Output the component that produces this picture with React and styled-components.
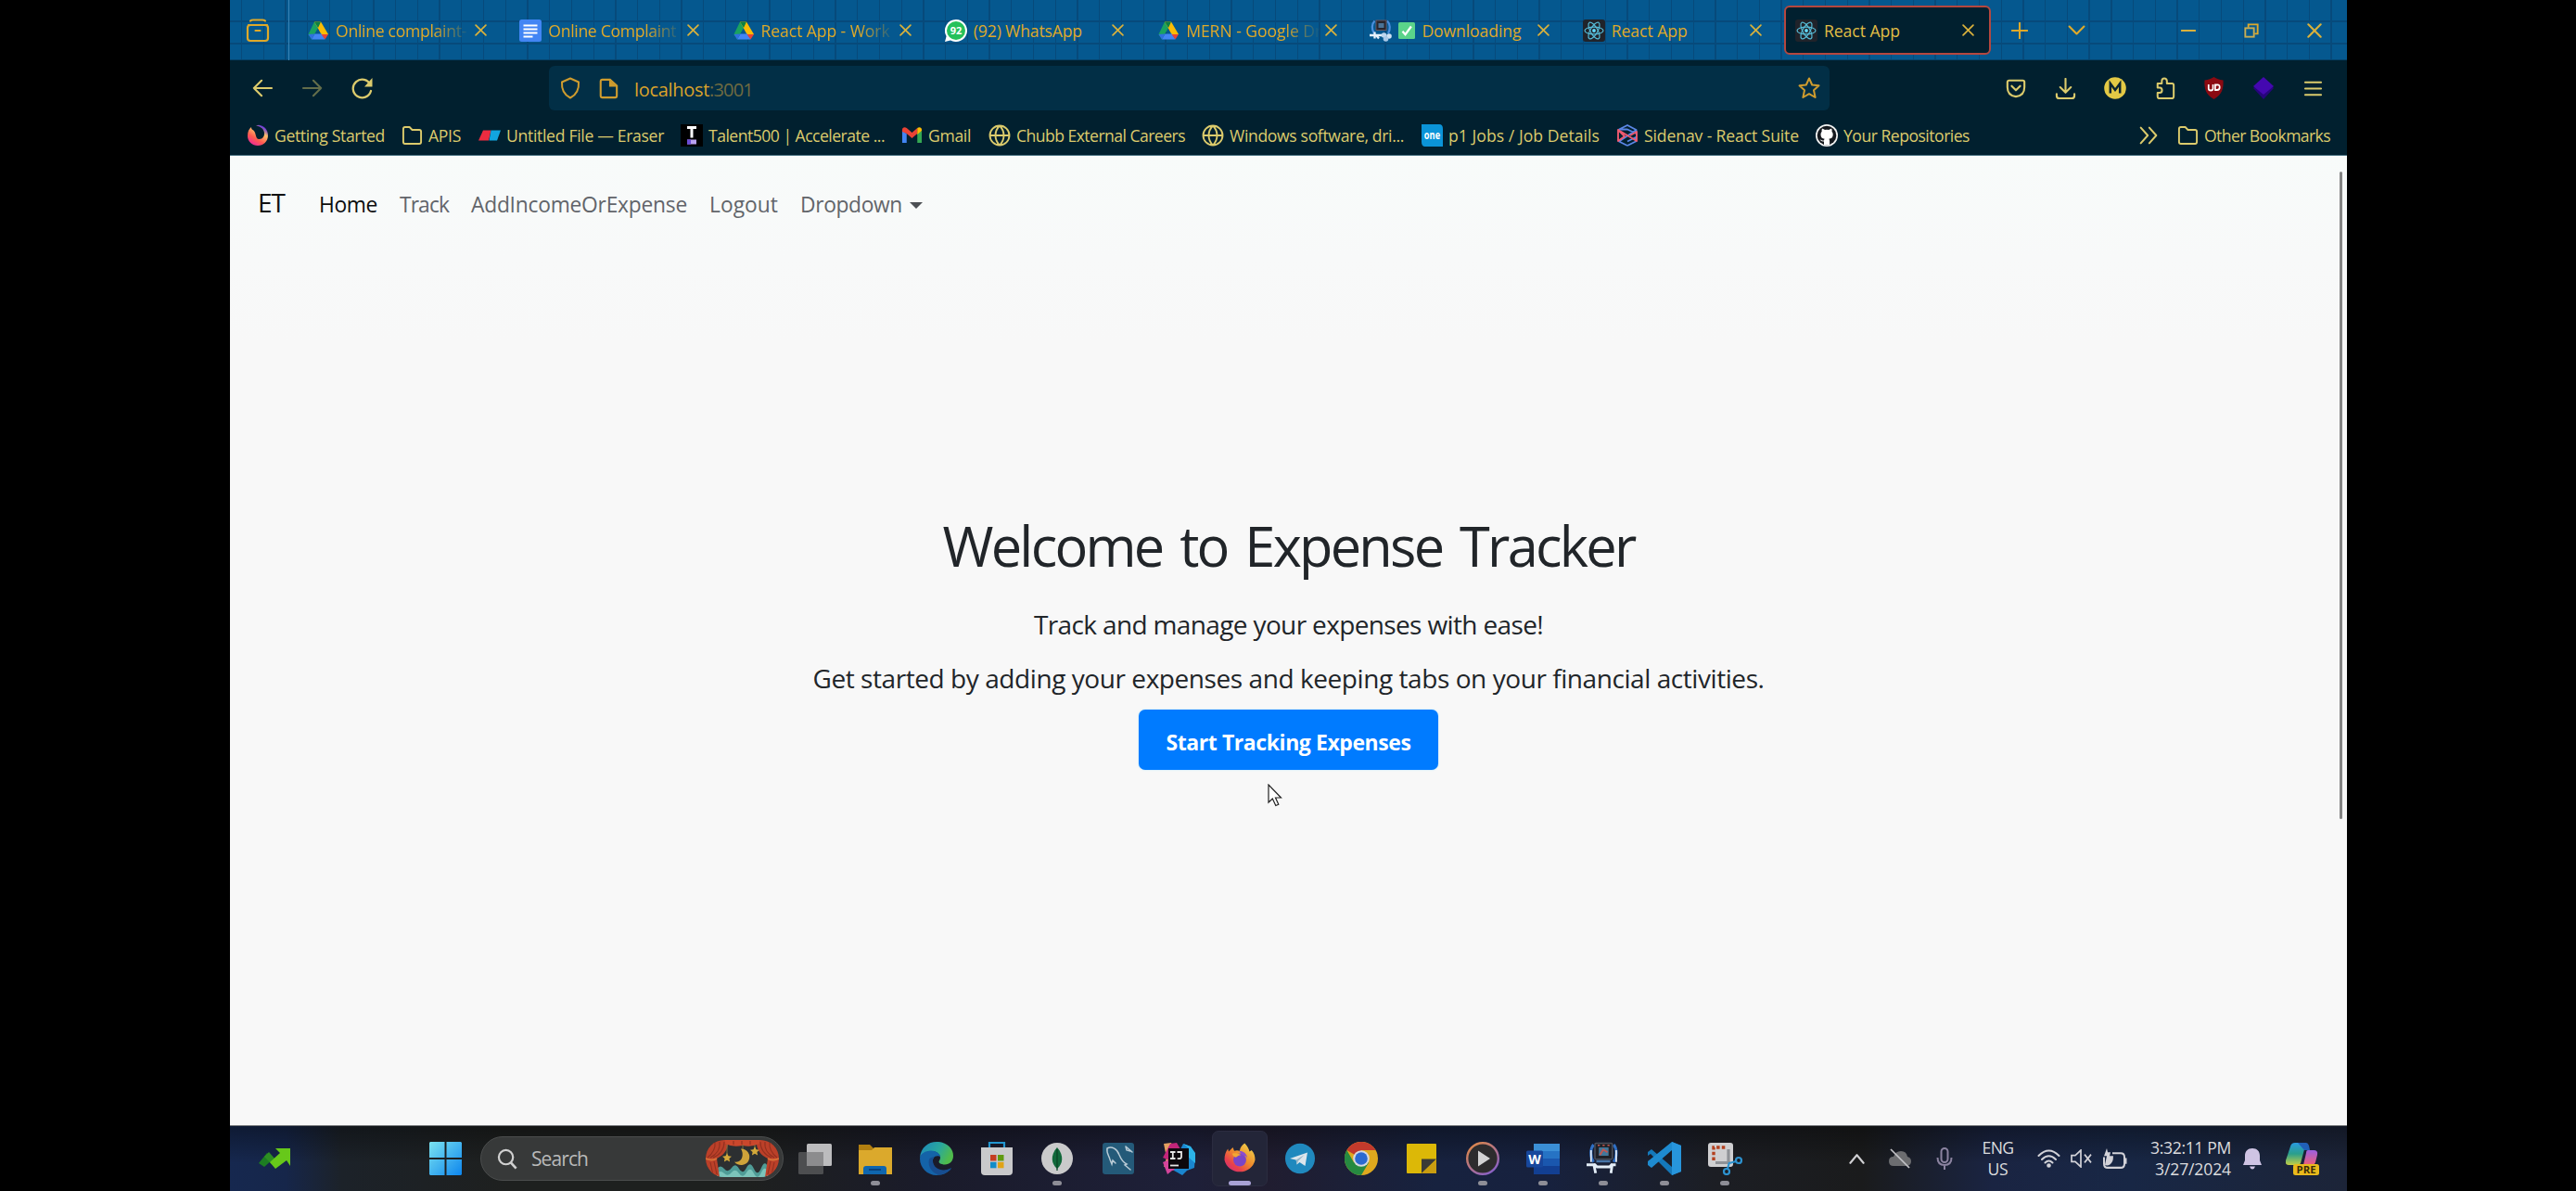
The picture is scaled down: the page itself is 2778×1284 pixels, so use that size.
import React, { useLayoutEffect, useRef, useState } from 'react';
import styled, { createGlobalStyle } from 'styled-components';

const Global = createGlobalStyle`
  * { box-sizing: border-box; }
  body { margin: 0; background: #000; font-family: "Open Sans", "Noto Sans", sans-serif; }
  h1, p { margin: 0; font-weight: 400; }
`;

/* ---------- text that keeps a given line length ---------- */
const Line = styled.span`
  display: block;
  flex: none;
  width: ${(p) => p.$w}px;
  white-space: nowrap;
`;

function Fit({ w, children }) {
  const ref = useRef(null);
  const [ls, setLs] = useState(0);
  useLayoutEffect(() => {
    const natural = ref.current.getBoundingClientRect().width;
    setLs((w - natural) / String(children).length);
  }, [w, children]);
  return (
    <Line $w={w}>
      <span ref={ref} style={{ letterSpacing: ls + 'px' }}>{children}</span>
    </Line>
  );
}

/* ---------- frame ---------- */
const Screen = styled.div`
  width: 2778px;
  height: 1284px;
  padding: 0 247px 0 248px;
  background: #000;
  overflow: hidden;
`;
const Desktop = styled.div`
  display: flex;
  flex-direction: column;
  width: 2283px;
  height: 1284px;
`;

/* ---------- tab strip ---------- */
const TabStrip = styled.div`
  display: flex;
  align-items: center;
  height: 65px;
  flex: none;
  background-color: #05588f;
  background-image:
    linear-gradient(to bottom, transparent 22px, #074a7b 22px, #074a7b 24px, transparent 24px, transparent 46px, #074a7b 46px, #074a7b 48px, transparent 48px, transparent 64px, #06426b 64px),
    repeating-linear-gradient(to right, transparent 0, transparent 12px, #074a7b 12px, #074a7b 13.3px, transparent 13.3px, transparent 23.72px);
`;
const ViewButton = styled.div`
  display: flex;
  align-items: center;
  justify-content: center;
  flex: none;
  width: 64px;
  height: 65px;
  padding-right: 4px;
  border-right: 1px solid #3a86b8;
`;
const Tabs = styled.div`
  display: flex;
  flex: none;
  gap: 6.2px;
  margin-left: 7px;
`;
const Tab = styled.div`
  display: flex;
  align-items: center;
  width: 223.1px;
  height: 53px;
  padding-left: 10px;
  border-radius: 6px;
  border: 2px solid ${(p) => (p.$active ? '#b5473f' : 'transparent')};
  background: ${(p) => (p.$active ? '#01202f' : 'transparent')};
`;
const TabLabel = styled.div`
  display: flex;
  align-items: center;
  flex: none;
  gap: 7px;
  width: 150px;
  height: 30px;
  margin: 1px -6px 0 7px;
  overflow: hidden;
  font-size: 17.6px;
  line-height: 30px;
  color: ${(p) => (p.$active ? '#e0bd45' : '#dfa92a')};
  mask-image: ${(p) => (p.$fade ? 'linear-gradient(to right, #000 105px, transparent 145px)' : 'none')};
`;
const StripTools = styled.div`
  display: flex;
  align-items: center;
`;
const WindowButtons = styled.div`
  display: flex;
  margin-left: 57px;
`;
const Slot = styled.div`
  display: flex;
  align-items: center;
  justify-content: center;
  flex: none;
  width: ${(p) => p.$w}px;
  height: ${(p) => p.$h || 24}px;
`;

/* ---------- toolbar ---------- */
const Toolbar = styled.div`
  display: flex;
  align-items: center;
  height: 60px;
  flex: none;
  background: #01202f;
`;
const UrlBar = styled.div`
  display: flex;
  align-items: center;
  flex: none;
  width: 1381px;
  height: 48px;
  margin: 0 174px 0 166px;
  border-radius: 6px;
  background: #022f46;
  color: #dba32b;
  font-size: 20px;
`;
const UrlText = styled.div`
  display: flex;
  flex: 1;
  padding: 2px 0 0 10px;
`;
const Port = styled.span`
  color: #6f6b41;
`;

/* ---------- bookmarks ---------- */
const Bookmarks = styled.div`
  display: flex;
  align-items: center;
  height: 43px;
  padding: 0 0 1px 18px;
  flex: none;
  background: #01202f;
  border-bottom: 1px solid #4d7685;
  color: #dccb6c;
  font-size: 17.6px;
  line-height: 26px;
`;
const Bookmark = styled.div`
  display: flex;
  align-items: center;
  flex: none;
  gap: 6px;
  margin-right: ${(p) => (p.$gap === undefined ? 18 : p.$gap)}px;
`;

/* ---------- page ---------- */
const Page = styled.div`
  position: relative;
  height: 1045px;
  flex: none;
  background: linear-gradient(#f8fbfa 0, #f8f9f9 110px, #f8f8f8 200px);
`;
const Navbar = styled.nav`
  display: flex;
  align-items: baseline;
  height: 84px;
  padding: 32px 0 0 30px;
  color: #62656a;
  font-size: 22.8px;
  line-height: 36px;
`;
const Brand = styled.div`
  margin-right: 37px;
  font-size: 28px;
  color: #111;
`;
const NavLink = styled.div`
  display: flex;
  align-items: center;
  gap: 8px;
  margin-right: 24px;
  color: ${(p) => (p.$active ? '#0c0d0e' : 'inherit')};
`;
const Caret = styled.span`
  border-left: 7px solid transparent;
  border-right: 7px solid transparent;
  border-top: 7px solid #4d5054;
`;
const Hero = styled.main`
  display: flex;
  flex-direction: column;
  align-items: center;
  padding: 294px 0 0 0;
  color: #212529;
`;
const Title = styled.h1`
  font-size: 59.5px;
  line-height: 84px;
  word-spacing: 6px;
`;
const Lead = styled.p`
  margin-top: ${(p) => p.$top}px;
  font-size: 28px;
  line-height: 40px;
`;
const StartButton = styled.div`
  display: flex;
  align-items: center;
  justify-content: center;
  width: 323px;
  height: 65px;
  margin-top: 14px;
  padding-top: 4px;
  border-radius: 7px;
  background: #007bff;
  box-shadow: 0 0 2px #9fdcff;
  color: #fff;
  font-size: 23px;
  font-weight: 700;
`;
const Pointer = styled.svg`
  position: absolute;
  left: 1119px;
  top: 677px;
`;
const ScrollThumb = styled.div`
  position: absolute;
  right: 5px;
  top: 17px;
  width: 3px;
  height: 698px;
  border-radius: 2px;
  background: #858585;
`;

/* ---------- taskbar ---------- */
const Taskbar = styled.div`
  display: flex;
  align-items: center;
  height: 71px;
  flex: none;
  border-top: 1px solid #77797c;
  color: #d4d4d6;
  background:
    linear-gradient(rgba(0, 0, 0, 0.35), rgba(0, 0, 0, 0) 40px),
    linear-gradient(to right, #16284f 0, #16264a 60px, #1c2229 120px, #1e201f 300px, #1e201f 560px, #1a1b2a 750px, #1e2039 1040px, #201d30 1120px, #17223f 1300px, #17213e 1420px, #1c1e24 1600px, #1a1b1c 1760px, #1a2442 1900px, #182745 2050px, #1c2438 2283px);
`;
const Trend = styled.div`
  width: 215px;
  padding-left: 31px;
  height: 24px;
`;
const Search = styled.div`
  display: flex;
  align-items: center;
  justify-content: space-between;
  width: 327px;
  height: 48px;
  margin-left: 20px;
  padding: 0 4px 0 17px;
  border: 1px solid #4b4d4d;
  border-radius: 24px;
  background: #373939;
  color: #b9baba;
  font-size: 21px;
`;
const SearchText = styled.div`
  flex: 1;
  padding-left: 14px;
`;
const Apps = styled.div`
  display: flex;
  flex: none;
  margin-left: 1px;
`;
const AppCell = styled.div`
  display: flex;
  flex-direction: column;
  align-items: center;
  width: 65.45px;
  height: 60px;
`;
const AppTile = styled.div`
  display: flex;
  flex-direction: column;
  align-items: center;
  width: 60px;
  height: 60px;
  padding-top: 11px;
  border-radius: 7px;
  border: 1px solid ${(p) => (p.$active ? '#2b2c40' : 'transparent')};
  background: ${(p) => (p.$active ? '#232538' : 'transparent')};
`;
const Indicator = styled.div`
  width: ${(p) => (p.$wide ? 24 : 10)}px;
  height: 5px;
  margin-top: 6px;
  border-radius: 3px;
  background: ${(p) => (p.$wide ? '#a9a2d6' : '#8e8e97')};
`;
const Tray = styled.div`
  display: flex;
  align-items: center;
  flex: none;
  margin-left: 86px;
`;
const Clock = styled.div`
  display: flex;
  flex-direction: column;
  align-items: ${(p) => p.$align || 'center'};
  width: ${(p) => p.$w}px;
  font-size: 17.6px;
  line-height: 23.5px;
  color: #dcdcde;
`;

/* ---------- icons ---------- */
const Svg = ({ w = 24, h = w, vb = '0 0 24 24', children, ...rest }) => (
  <svg width={w} height={h} viewBox={vb} fill="none" preserveAspectRatio="none" {...rest}>{children}</svg>
);
const Stroke = ({ d, w = 24, h = w, c = '#dccb6c', s = 2, o = 1 }) => (
  <Svg w={w} h={h}><path d={d} stroke={c} strokeWidth={s} strokeOpacity={o} strokeLinecap="round" strokeLinejoin="round" /></Svg>
);
const Close = ({ s = 13, c = '#d9b13c' }) => <Stroke w={s} c={c} s={3.2} d="M2 2l20 20M22 2L2 22" />;

const Drive = () => (
  <Svg>
    <path d="M8 2.500L12 9 5 21.500 1.500 16z" fill="#1aa260" />
    <path d="M8 2.500h7L23 16h-7.500z" fill="#fbbc04" />
    <path d="M8 2.500h7L12 9z" fill="#0d8043" />
    <path d="M8.500 15.500h7.500l3.500 6H5z" fill="#4285f4" />
    <path d="M1.500 16l3.500 5.500 3.500-6z" fill="#2f6fe0" />
    <path d="M15.500 16H23l-3.500 5.500z" fill="#ea4335" />
  </Svg>
);
const Doc = () => (
  <Svg>
    <rect width="24" height="24" rx="2.500" fill="#4285f4" />
    <path d="M4.500 6.500h15M4.500 10.500h15M4.500 14.500h15M4.500 18.500h10" stroke="#fff" strokeWidth="2" />
  </Svg>
);
const WhatsApp = () => (
  <Svg>
    <path d="M12 0a12 12 0 1 1-6 22.400L0 24l1.600-6A12 12 0 0 1 12 0z" fill="#fff" />
    <circle cx="12" cy="12" r="10" fill="#25c15a" />
    <text x="12" y="15.800" textAnchor="middle" fontSize="11" fontWeight="700" fill="#fff" fontFamily="Open Sans">92</text>
  </Svg>
);
const Robot = ({ s = 24 }) => (
  <Svg w={s}>
    <path d="M5 2C2.500 5 2.500 11 5 14.500M19.500 2c2.500 3 2.500 9 0 12.500" stroke="#2f6fc4" strokeWidth="2" />
    <path d="M3.200 6v8.500M21.300 6v8.500" stroke="#dfe9f5" strokeWidth="1.200" />
    <rect x="6" y="1" width="12.500" height="11.500" rx=".8" fill="#1e2027" stroke="#494e5a" />
    <path d="M8.800 4h7v6h-7z" fill="#41779b" />
    <path d="M8 2.500h1.500M11.500 2.500H13M15 2.500h1.500" stroke="#c2574f" strokeWidth="1" />
    <path d="M9.500 9.500l2.500-4 3 2" stroke="#c2574f" strokeWidth="1.300" />
    <path d="M7 14l10 0" stroke="#4674a8" strokeWidth="1.600" />
    <path d="M0 16.500h6l1.500 1.500h9l1.500-1.500h3M5 15.500l1.500 7M18.500 15.500l-1 7" stroke="#e3edf7" strokeWidth="1.900" />
  </Svg>
);
const RobotTab = () => (
  <Svg>
    <path d="M5.500 1.500C2 5 2 11 5 15M19 1.500C22.500 5 22.500 11 20 15" stroke="#4a8fdd" strokeWidth="2.200" />
    <rect x="7" y="1" width="11" height="10.500" fill="#26262e" stroke="#7b5a60" strokeWidth=".8" />
    <path d="M9.500 4h6v5h-6z" fill="#4b7396" />
    <path d="M0 17h13M5.500 13.500v7M7 17l3 3.500" stroke="#e8f1fb" strokeWidth="2.300" />
    <circle cx="15.500" cy="17" r="2.800" fill="#bcd6ef" /><circle cx="21" cy="18" r="2.800" fill="#cfe2f4" /><circle cx="17.500" cy="21" r="2.800" fill="#a9c9e8" />
  </Svg>
);
const Check = () => (
  <Svg w={18}>
    <rect width="24" height="24" rx="2" fill="#5bd38a" />
    <path d="M6 13l4 4.500L18.500 6" stroke="#fff" strokeWidth="3" />
  </Svg>
);
const ReactLogo = () => (
  <Svg>
    <rect width="24" height="24" rx="3" fill="#20232a" />
    <g stroke="#57bdd8" strokeWidth="1.200">
      <ellipse cx="12" cy="12" rx="10" ry="3.900" />
      <ellipse cx="12" cy="12" rx="10" ry="3.900" transform="rotate(60 12 12)" />
      <ellipse cx="12" cy="12" rx="10" ry="3.900" transform="rotate(120 12 12)" />
    </g>
    <circle cx="12" cy="12" r="1.900" fill="#61dafb" />
  </Svg>
);
const ViewIcon = () => (
  <Svg w={26} vb="0 0 26 26" stroke="#dfa92a" strokeWidth="2.200" strokeLinecap="round">
    <path d="M5 2.500Q6 1.500 8 1.500h10q2 0 3 1M3 7h20" />
    <rect x="2" y="7" width="22" height="17" rx="3" />
    <path d="M10.500 13h5" />
  </Svg>
);
const Firefox = ({ s = 24 }) => (
  <Svg w={s}>
    <defs>
      <linearGradient id="ff" x1="20" y1="2" x2="4" y2="22" gradientUnits="userSpaceOnUse">
        <stop offset="0" stopColor="#f0d24a" /><stop offset=".45" stopColor="#ee8a2c" /><stop offset=".75" stopColor="#e8404c" /><stop offset="1" stopColor="#cf2a7c" />
      </linearGradient>
    </defs>
    <path d="M15.500 1c2 2 3 4 3.500 6l1.500-1C22.500 8 23 10.500 23 13A11.200 10.500 0 0 1 1 13c0-3.500.8-6 2.500-8l.5 2L7 4l1 2.500c1.500-.5 2.500-.5 4 0 0-2 1.500-4 3.500-5.500z" fill="url(#ff)" />
    <circle cx="12" cy="13" r="4.600" fill="#7a45c8" />
    <path d="M11.500 6.500c3 0 5.500 2 6 5-1-1.500-2.500-2-4-2z" fill="#8a4bd0" />
    <path d="M6.500 8.500c2-.5 3.500-.5 6.500 1-2 0-2.500 1-3.500 1.500s-2.500-1-3-2.500z" fill="#f2a832" />
  </Svg>
);
const FirefoxMark = () => (
  <Svg>
    <defs>
      <linearGradient id="fm" x1="16" y1="2" x2="5" y2="20" gradientUnits="userSpaceOnUse">
        <stop offset="0" stopColor="#6a3ad8" /><stop offset=".3" stopColor="#ffc06a" /><stop offset=".7" stopColor="#ff5a4f" /><stop offset="1" stopColor="#f0328c" />
      </linearGradient>
    </defs>
    <path d="M13 .8c6 .7 10 5.200 10 11.200 0 6.500-5 11-11 11S1 18.500 1 12.500C1 8 2.500 5 5 3c0 1.500.5 2.500 1.500 3C11 8 8.500 16 13.500 16c4 0 6-3.500 5.500-7-.5-3.500-3-6.500-9-7.500z" fill="url(#fm)" />
  </Svg>
);
const Folder = () => <Stroke w={23} h={24} s={2} d="M4 3h5l3 3h8a2 2 0 0 1 2 2v11a2 2 0 0 1-2 2H4a2 2 0 0 1-2-2V5a2 2 0 0 1 2-2z" />;
const Globe = () => <Stroke w={24} s={1.900} d="M12 1.500a10.500 10.500 0 1 0 0 21 10.500 10.500 0 0 0 0-21zM1.500 12h21M12 1.500c-6 6-6 15 0 21M12 1.500c6 6 6 15 0 21" />;
const Eraser = () => (
  <Svg>
    <path d="M5 6.500h8.500l-2.500 11H0z" fill="#ec2c40" />
    <path d="M13.500 6.500H24l-4 11h-8.500z" fill="#12a5e0" />
  </Svg>
);
const Talent = () => (
  <Svg>
    <rect width="24" height="24" fill="#000" />
    <path d="M7 3.500h10M12 3.500v11" stroke="#fff" strokeWidth="3" />
    <rect x="7" y="16.500" width="10" height="5" fill="#b9a2f0" />
    <rect x="7" y="16.500" width="4" height="5" fill="#6b4cd8" />
  </Svg>
);
const Gmail = () => (
  <Svg w={23} h={24}>
    <path d="M1 7v13h5V10z" fill="#4285f4" />
    <path d="M23 7v13h-5V10z" fill="#34a853" />
    <path d="M1 6c0-3 3-3.500 5-2l6 5 6-5v6l-6 5-6-5-5-2z" fill="#ea4335" />
    <path d="M18 4c2-1.500 5-1 5 2v1l-5 4z" fill="#fbbc04" />
  </Svg>
);
const One = () => (
  <Svg w={23} h={24}>
    <path d="M0 0h20q4 0 4 5v19H4q-4 0-4-5z" fill="#0b94d8" />
    <text x="12" y="16" textAnchor="middle" fontSize="12.500" fontWeight="700" fill="#fff" fontFamily="Open Sans" textLength="18" lengthAdjust="spacingAndGlyphs">one</text>
  </Svg>
);
const Suite = () => (
  <Svg strokeWidth="1.900" strokeLinejoin="round">
    <path d="M3 5.500L12 1l9.500 5v4L12 5.500z M12 23l-9-4.500 18-12M12 23l9-4.500V14l-9 4.500" stroke="#5a86e6" />
    <path d="M2 6v12l7-5zM2 6l20 12V8l-7 4" stroke="#ef5a70" />
  </Svg>
);
const Github = () => (
  <Svg>
    <circle cx="12" cy="12" r="12" fill="#f2f2f2" />
    <circle cx="12" cy="12" r="10.300" fill="#15191e" />
    <path d="M9 22v-3.500c-3 .5-3.500-1.500-4.500-2 1.500-.5 2 1.500 4.500 1 0-.8.300-1.300.7-1.700C7 15.500 5.500 14 5.500 11c0-1.400.5-2.400 1.200-3.200-.2-.8-.2-1.800.2-3 1.200 0 2.200.6 3 1.200a11 11 0 0 1 4.400 0c.8-.6 1.800-1.200 3-1.200.4 1.200.4 2.200.2 3 .7.8 1.200 1.800 1.200 3.200 0 3-1.500 4.500-4.400 4.800.5.500.8 1.200.8 2.400V22z" fill="#fff" />
  </Svg>
);
const UBlock = () => (
  <Svg w={23} h={24}>
    <path d="M12 0c3 2 6 3 10.500 3.500C23 13 21 19 12 24 3 19 1 13 1.500 3.500 6 3 9 2 12 0z" fill="#8b0a12" />
    <path d="M6 8v4.500q0 2 2.500 2t2.500-2V8M13.500 8.500v5.500h2q3 0 3-3t-3-2.500z" stroke="#fff" strokeWidth="1.800" />
  </Svg>
);
const Restore = () => (
  <Svg w={16}>
    <path d="M7 7V2h15v15h-5" stroke="#dfa92a" strokeWidth="2.800" />
    <rect x="2" y="8" width="14" height="14" stroke="#c9ad52" strokeWidth="2.800" />
  </Svg>
);

const Curtain = () => (
  <Svg w={79} h={40} vb="0 0 79 40">
    <defs><clipPath id="pill"><rect width="79" height="40" rx="20" /></clipPath></defs>
    <g clipPath="url(#pill)">
      <rect width="79" height="40" fill="#2c2f31" />
      <path d="M12 31q4-5 8 0t8-1 8 1 8-1 8 1 8-1 8 1v10H12z" fill="#4f9c97" />
      <path d="M12 36q4-4 8 0t8-1 8 1 8-1 8 1 8-1 8 1v8H12z" fill="#7cc4ba" />
      <path d="M0 0h24c1 10-4 16-12 20l3 20H0zM79 0H55c-1 10 4 16 12 20l-3 20h15z" fill="#bb4029" />
      <path d="M21 0h37v4q-8 4-18.500 2Q29 8 21 4z" fill="#c9472c" />
      <path d="M10 2c1 8-3 13-8 17M15 2c1 8-4 14-10 17M20 2c0 8-5 14-12 17M69 2c-1 8 3 13 8 17M64 2c-1 8 4 14 10 17M59 2c0 8 5 14 12 17M5 24l3 14M9 23l3 14M74 24l-3 14M70 23l-3 14M30 1v4M39 1v4M48 1v4" stroke="#92301f" strokeWidth="1.100" />
      <path d="M0 20q7 3 12 0M79 20q-7 3-12 0" stroke="#d87338" strokeWidth="1.800" />
      <path d="M23 5v10M40 5v5M53 5v4" stroke="#7d7040" />
      <path d="M23 14l1.500 3.300 3.500.4-2.600 2.400.7 3.500-3.100-1.800-3.100 1.800.7-3.500-2.600-2.400 3.500-.4zM53 7l1.500 3.300 3.500.4-2.600 2.400.7 3.500-3.100-1.800-3.100 1.800.7-3.500-2.600-2.400 3.500-.4z" fill="#d3a93a" />
      <path d="M38 9.500a9 8.800 0 1 1-7 14c8 2 11-8 7-14z" fill="#cfa33a" />
    </g>
  </Svg>
);
const TrendIcon = () => (
  <Svg w={34} h={23} vb="0 0 34 23">
    <path d="M0 17l9-11 6 7-9 8z" fill="#1d7d22" />
    <path d="M6 10l5-5 7 8-4 5z" fill="#2d8f22" />
    <path d="M12 16l11-10-5-5h16v19l-4-6-12 9z" fill="#67c81a" />
  </Svg>
);
const StartIcon = () => (
  <Svg w={35} h={36} vb="0 0 35 36">
    <defs><linearGradient id="win" x1="0" y1="0" x2="1" y2="1"><stop stopColor="#7be3f0" /><stop offset="1" stopColor="#0d86ee" /></linearGradient></defs>
    <path d="M1 0h15.500v17H0V1zM18.500 0H34l1 1v16H18.500zM0 19h16.500v17H1l-1-1zM18.500 19H35v16l-1 1H18.500z" fill="url(#win)" />
  </Svg>
);
const V = '0 0 36 36';
const TaskView = () => <Svg w={36} vb={V}><rect x="0" y="11" width="27" height="24" rx="1.500" fill="#4d4e50" /><rect x="9" y="2" width="27" height="24" rx="1.500" fill="#bcbcbe" /><rect x="9" y="11" width="18" height="15" fill="#8c8c8e" /></Svg>;
const Explorer = () => <Svg w={36} vb={V}><path d="M0 3h12l4 4h20v28H0z" fill="#b27f10" /><path d="M0 9h14l3-3h19v29H0z" fill="#dba92c" /><path d="M5 35v-6q0-3 3-3h19q3 0 3 3v6z" fill="#0f66ae" /><path d="M11 30h13" stroke="#0b3f77" strokeWidth="1.800" /></Svg>;
const Edge = () => (
  <Svg w={36} vb={V}>
    <defs>
      <linearGradient id="e1" x1="0" y1="0" x2="1" y2=".4"><stop stopColor="#1b86bd" /><stop offset=".6" stopColor="#2aa89d" /><stop offset="1" stopColor="#4fbb4c" /></linearGradient>
    </defs>
    <path d="M0 17C1 6 9 0 18 0c11 0 18 7 18 15 0 6-4 9.500-9 9.500-4 0-6.500-1.500-6.500-3 0-1 1.500-2 1.500-4.500 0-3-3-7-9-7S2 13 0 17z" fill="url(#e1)" />
    <path d="M0 18c0-5 6-8.500 12-8.500 5 0 10 3 10 7-1-1.500-6-2-7.500 1.500C12 24 17 32 26 31c4-.4 7-2 8-2.500C30 34 24 36 18 36 8 36 0 28 0 18z" fill="#1463a8" />
    <path d="M10 19c-2 8 4 16 12 16.500 5-1 10-3.500 12-7.500-8 5-19 2-20-7-.3-2 .5-4 1.500-5-3 .5-5 1.500-5.500 3z" fill="#174d90" />
  </Svg>
);
const Store = () => <Svg w={36} vb={V}><path d="M10 9V1h16v8" stroke="#2296cf" strokeWidth="2.200" /><path d="M1 6h34v26q0 4-4 4H5q-4 0-4-4z" fill="#c9c9cb" /><path d="M11 14h6.500v6.500H11z" fill="#c43e22" /><path d="M19 14h6.500v6.500H19z" fill="#5f9a10" /><path d="M11 21.800h6.500v6.500H11z" fill="#128cc8" /><path d="M19 21.800h6.500v6.500H19z" fill="#e0a316" /></Svg>;
const Mongo = () => <Svg w={36} vb={V}><circle cx="18" cy="18" r="17" fill="#cacacb" /><path d="M18 6c8 9 6 18 0 23-6-5-8-14 0-23z" fill="#11683a" /><path d="M18 8v23" stroke="#0a4526" strokeWidth="1.300" /></Svg>;
const MySql = () => <Svg w={36} vb={V}><rect x="1" y="1" width="34" height="34" rx="3" fill="#245a79" /><path d="M6 7c5-3 11 1 13 7 2 5 4 8 8 10l-2 1 6 5M6 7c-1 5 2 8 3 12l2 5 1-4 3 3M26 5l7 6M26 5l1 4 4 1" stroke="#b9cbd6" strokeWidth="1.500" strokeLinecap="round" /></Svg>;
const IntelliJ = () => (
  <Svg w={36} vb={V}>
    <path d="M2 2l8-1 5 10-4 14-9 2 3-10z" fill="#e5a060" />
    <path d="M9 2l7-1 4 7-10 13-9-4z" fill="#c2257a" />
    <path d="M1 22l10-4 6 12-6 1-5 4z" fill="#d4449b" />
    <path d="M20 8l3-6 8 3 5 9-1 14-8 3-5 5-9-5z" fill="#1a86cf" />
    <path d="M23 2l6 5v10l7 6V12l-5-7z" fill="#2cb3e8" />
    <rect x="7" y="7" width="22" height="22" fill="#0d080d" />
    <path d="M9 11h5.500M11.800 11v7M9 18h5.500M16.500 11H21v5q0 2.200-2.500 2.200h-1.800" stroke="#e6e6e6" strokeWidth="1.800" />
    <path d="M9 25.500h9" stroke="#e6e6e6" strokeWidth="1.800" />
  </Svg>
);
const Telegram = () => <Svg w={36} vb={V}><ellipse cx="18" cy="18" rx="16" ry="16.300" fill="#2089be" /><path d="M7 18L26 11.500 23.500 26l-6-4-3 2.500-.8-5z" fill="#dde6ec" /><path d="M13.700 19.500l9-5.500-6.500 6.500-1.700 4z" fill="#94b5c8" /></Svg>;
const Chrome = () => <Svg w={36} vb={V}><circle cx="18" cy="18" r="18" fill="#dfa91e" /><path d="M18 18L2.400 9A18 18 0 0 1 33.600 9H18z" fill="#c23a2c" /><path d="M18 18l-7.800 4.500L2.400 9A18 18 0 0 0 18 36l8-13.500z" fill="#268a41" /><circle cx="18" cy="18" r="8.800" fill="#d6d9de" /><circle cx="18" cy="18" r="6.800" fill="#2b6ad0" /></Svg>;
const Sticky = () => <Svg w={36} vb={V}><rect x="2" y="2" width="32" height="32" rx="1" fill="#dcb807" /><path d="M18 34V18.500h16z" fill="#3b3a36" /><path d="M18 34h16V19z" fill="#c99d10" /></Svg>;
const Media = () => (
  <Svg w={36} vb={V}>
    <defs><linearGradient id="mp" x1="0" y1="0" x2=".7" y2="1"><stop stopColor="#e58a3e" /><stop offset="1" stopColor="#8b62c4" /></linearGradient></defs>
    <circle cx="18" cy="18" r="16.800" fill="#2d2c2e" stroke="url(#mp)" strokeWidth="2.400" /><path d="M13 9.500l13 8.500-13 8.500z" fill="#d3d3d4" />
  </Svg>
);
const Word = () => <Svg w={36} vb={V}><path d="M8 2h28v9H8z" fill="#3b8fd6" /><path d="M8 10h28v8H8z" fill="#2673c4" /><path d="M8 18h28v8H8z" fill="#1a57ae" /><path d="M8 26h28v9H8z" fill="#123f92" /><rect x="0" y="9.500" width="18" height="18" rx="1.500" fill="#17479c" /><text x="9" y="23.500" textAnchor="middle" fontSize="14" fontWeight="700" fill="#fff" fontFamily="Open Sans">W</text></Svg>;
const VsCode = () => <Svg w={36} vb={V}><path d="M26 0l10 4v28l-10 4L3 13l-3 2V11l4-3 22 19z" fill="#1478ba" /><path d="M26 0v9L4 28l-4-3v-4z" fill="#1e8bd0" /><path d="M26 0l10 4v28l-10 4z" fill="#2795dc" /></Svg>;
const Snip = () => (
  <Svg w={38} h={36} vb="0 0 38 36">
    <rect x="1" y="1" width="27" height="26" rx="3" fill="#cfcfd1" />
    <path d="M7 20V6h14" stroke="#b4401f" strokeWidth="3.400" strokeDasharray="3.500 2.200" />
    <path d="M23 8v16M9 22.500h16" stroke="#8f9297" strokeWidth="3.200" />
    <circle cx="34" cy="20" r="3" stroke="#2d92cf" strokeWidth="2.200" /><circle cx="21" cy="32" r="3" stroke="#2d92cf" strokeWidth="2.200" />
    <path d="M31 21l-7 2M22 29l2-7" stroke="#2d92cf" strokeWidth="2.200" />
  </Svg>
);
const Cloud = () => <Svg w={26} h={22} vb="0 0 26 22"><path d="M6 19q-5 0-5-5t5-5q2-6 8-6t7 6q4 1 4 5t-4 5z" fill="#6c6d70" /><path d="M3 1l20 20" stroke="#c4c4c8" strokeWidth="1.700" /></Svg>;
const Mic = () => <Svg w={18} h={25} vb="0 0 18 25" stroke="#8b83a0" strokeWidth="2"><rect x="5.500" y="1" width="7" height="15" rx="3.500" /><path d="M1.500 11q0 8 7.500 8t7.500-8M9 19v5" /></Svg>;
const Wifi = () => <Svg w={25} h={20} vb="0 0 25 20" stroke="#d2d2d8" strokeWidth="2" strokeLinecap="round"><path d="M1.500 7Q12.500-4 23.500 7M5 11q7.500-7.500 15 0M8.500 14.500q4-4 8 0" /><circle cx="12.500" cy="17.500" r="1.300" fill="#d2d2d8" /></Svg>;
const Volume = () => <Svg w={24} h={20} vb="0 0 24 18" stroke="#d2d2d8" strokeWidth="1.700"><path d="M1 6h4l6-5v16l-6-5H1zM15 5l7 8M22 5l-7 8" /></Svg>;
const Battery = () => <Svg w={26} h={23} vb="0 0 26 22"><path d="M10 5h9q4 0 4 4v7q0 4-4 4H5q-4 0-4-4V9" stroke="#d2d2d8" strokeWidth="2" /><path d="M23.500 10h2v6h-2z" fill="#d2d2d8" /><path d="M4 0L1 8h3l-2 9q2 1.500 5 0 4-2 4-9H7l1-4H5z" fill="#d2d2d8" /></Svg>;
const Bell = () => <Svg w={22} h={24} vb="0 0 22 24"><path d="M11 1c5 0 8 3 8 8v5l2 5H1l2-5V9c0-5 3-8 8-8z" fill="#cfc4e4" /><path d="M8 20.500h6q-1 3-3 3t-3-3z" fill="#cfc4e4" /></Svg>;
const Copilot = () => (
  <Svg w={36} vb={V}>
    <defs>
      <linearGradient id="cp1" x1="0" y1="0" x2="0" y2="1"><stop stopColor="#2a9ae0" /><stop offset=".5" stopColor="#2a9f8b" /><stop offset="1" stopColor="#c4cf45" /></linearGradient>
      <linearGradient id="cp2" x1="0" y1="0" x2="0" y2="1"><stop stopColor="#9a5fe0" /><stop offset="1" stopColor="#ee5f78" /></linearGradient>
    </defs>
    <path d="M10 1h12l-6 22q-1 2-3 2H3q-4 0-3-5L5 5q1-4 5-4z" fill="url(#cp1)" />
    <path d="M13 1h9q2 0 3 3l1 5h-6z" fill="#2160b8" />
    <path d="M24 9h6q5 0 4 5l-2 8q-1 3-4 3h-9l3-13q0-3 2-3z" fill="url(#cp2)" />
    <rect x="8" y="24" width="28" height="12" rx="2.500" fill="#e9ba1c" />
    <text x="22" y="34" textAnchor="middle" fontSize="11" fontWeight="700" fill="#3a2c08" fontFamily="Open Sans" textLength="21" lengthAdjust="spacingAndGlyphs">PRE</text>
  </Svg>
);

/* ---------- data ---------- */
const tabs = [
  { icon: <Drive />, text: 'Online complaint-', w: 141, fade: true },
  { icon: <Doc />, text: 'Online Complaint', w: 138, fade: true },
  { icon: <Drive />, text: 'React App - Work', w: 139, fade: true },
  { icon: <WhatsApp />, text: '(92) WhatsApp', w: 117 },
  { icon: <Drive />, text: 'MERN - Google Dr', w: 146, fade: true },
  { icon: <RobotTab />, text: 'Downloading', w: 107, check: true },
  { icon: <ReactLogo />, text: 'React App', w: 82 },
  { icon: <ReactLogo />, text: 'React App', w: 82, active: true },
];
const bookmarks = [
  { icon: <FirefoxMark />, text: 'Getting Started', w: 119 },
  { icon: <Folder />, text: 'APIS', w: 35, gap: 19 },
  { icon: <Eraser />, text: 'Untitled File — Eraser', w: 170 },
  { icon: <Talent />, text: 'Talent500 | Accelerate ...', w: 190 },
  { icon: <Gmail />, text: 'Gmail', w: 46, gap: 19 },
  { icon: <Globe />, text: 'Chubb External Careers', w: 182 },
  { icon: <Globe />, text: 'Windows software, dri...', w: 188, gap: 19 },
  { icon: <One />, text: 'p1 Jobs / Job Details', w: 163 },
  { icon: <Suite />, text: 'Sidenav - React Suite', w: 167 },
  { icon: <Github />, text: 'Your Repositories', w: 136, gap: 183 },
];
const apps = [
  { icon: <TaskView /> },
  { icon: <Explorer />, open: true },
  { icon: <Edge /> },
  { icon: <Store /> },
  { icon: <Mongo />, open: true },
  { icon: <MySql /> },
  { icon: <IntelliJ /> },
  { icon: <Firefox s={36} />, active: true },
  { icon: <Telegram /> },
  { icon: <Chrome /> },
  { icon: <Sticky /> },
  { icon: <Media />, open: true },
  { icon: <Word />, open: true },
  { icon: <Robot s={36} />, open: true },
  { icon: <VsCode />, open: true },
  { icon: <Snip />, open: true },
];

export default function App() {
  return (
    <>
      <Global />
      <Screen>
        <Desktop>
          <TabStrip>
            <ViewButton><ViewIcon /></ViewButton>
            <Tabs>
              {tabs.map((t, i) => (
                <Tab key={i} $active={t.active}>
                  {t.icon}
                  <TabLabel $fade={t.fade} $active={t.active}>
                    {t.check && <Check />}
                    <Fit w={t.w}>{t.text}</Fit>
                  </TabLabel>
                  <Slot $w={24}><Close s={13} /></Slot>
                </Tab>
              ))}
            </Tabs>
            <StripTools>
              <Slot $w={62}><Stroke w={18} c="#dfa92a" s={2.700} d="M12 1v22M1 12h22" /></Slot>
              <Slot $w={60}><Stroke w={19} c="#dfa92a" s={2.700} d="M2 7l10 10L22 7" /></Slot>
              <WindowButtons>
                <Slot $w={68}><Stroke w={16} c="#d9b13c" s={3} d="M1 12h22" /></Slot>
                <Slot $w={68}><Restore /></Slot>
                <Slot $w={67}><Close s={16} /></Slot>
              </WindowButtons>
            </StripTools>
          </TabStrip>

          <Toolbar>
            <Slot $w={70}><Stroke w={22} s={2.300} d="M11 3L2 12l9 9M2 12h21" /></Slot>
            <Slot $w={38}><Stroke w={22} s={2.300} o={0.450} d="M13 3l9 9-9 9M22 12H1" /></Slot>
            <Slot $w={70}>
              <Svg><path d="M20.500 8.500A9.800 9.800 0 1 0 21 15" stroke="#dccb6c" strokeWidth="2.300" strokeLinecap="round" /><path d="M22.500 1v9.500H14z" fill="#dccb6c" /></Svg>
            </Slot>
            <UrlBar>
              <Slot $w={46}><Stroke w={24} c="#cf9c2e" d="M12 1.500l9 4c.5 7-1 13-9 17-8-4-9.500-10-9-17z" /></Slot>
              <Slot $w={36}>
                <Svg w={22} h={23}><path d="M5 2h9l8 7v11q0 2-2 2H5q-2 0-2-2V4q0-2 2-2z" stroke="#cf9c2e" strokeWidth="2.300" /><path d="M13 2v8h9z" fill="#cf9c2e" /></Svg>
              </Slot>
              <UrlText><Fit w={81}>localhost</Fit><Port><Fit w={47}>:3001</Fit></Port></UrlText>
              <Slot $w={45}><Stroke w={24} c="#cf9c2e" d="M12 1.500l3.200 7 7.300.8-5.500 5 1.600 7.700L12 18.200 5.400 22 7 14.300l-5.500-5 7.300-.8z" /></Slot>
            </UrlBar>
            <Slot $w={54}><Stroke w={22} s={2.300} d="M4 3h16q2 0 2 2v6q0 10-10 11Q2 21 2 11V5q0-2 2-2zM7 9.500l5 5 5-5" /></Slot>
            <Slot $w={53}><Stroke w={23} s={2.200} d="M12 1v15M6 10.500l6 6 6-6M2 18v2q0 3 3 3h14q3 0 3-3v-2" /></Slot>
            <Slot $w={54}>
              <Svg><circle cx="12" cy="12" r="11.800" fill="#e3c945" /><path d="M6.800 17.500V7l5.200 7 5.200-7v10.500" stroke="#0b2430" strokeWidth="2.500" /></Svg>
            </Slot>
            <Slot $w={53}><Stroke w={22} h={24} s={2.200} d="M8 7V4.500a3 3 0 0 1 6 0V7h6q2 0 2 2v12q0 2-2 2H5q-2 0-2-2v-4h2.500a2.500 2.500 0 0 0 0-5.500H3V7z" /></Slot>
            <Slot $w={53}><UBlock /></Slot>
            <Slot $w={54}>
              <Svg><path d="M12 2l11 10-11 12L1 12z" fill="#26057c" /><path d="M12 0l11 10-11 9L1 10z" fill="#4408b0" /></Svg>
            </Slot>
            <Slot $w={53}><Stroke w={19} s={2.300} d="M1 3.500h22M1 12h22M1 20.500h22" /></Slot>
          </Toolbar>

          <Bookmarks>
            {bookmarks.map((b) => (
              <Bookmark key={b.text} $gap={b.gap}>
                {b.icon}
                <Fit w={b.w}>{b.text}</Fit>
              </Bookmark>
            ))}
            <Bookmark $gap={21}><Stroke w={20} s={2.400} d="M2 2l9 10-9 10M13 2l9 10-9 10" /></Bookmark>
            <Bookmark $gap={0}><Folder /><Fit w={136}>Other Bookmarks</Fit></Bookmark>
          </Bookmarks>

          <Page>
            <Navbar>
              <Brand><Fit w={29}>ET</Fit></Brand>
              <NavLink $active><Fit w={63}>Home</Fit></NavLink>
              <NavLink><Fit w={53}>Track</Fit></NavLink>
              <NavLink><Fit w={233}>AddIncomeOrExpense</Fit></NavLink>
              <NavLink><Fit w={74}>Logout</Fit></NavLink>
              <NavLink><Fit w={110}>Dropdown</Fit><Caret /></NavLink>
            </Navbar>
            <Hero>
              <Title><Fit w={746}>Welcome to Expense Tracker</Fit></Title>
              <Lead $top={23}><Fit w={549}>Track and manage your expenses with ease!</Fit></Lead>
              <Lead $top={18}><Fit w={1026}>Get started by adding your expenses and keeping tabs on your financial activities.</Fit></Lead>
              <StartButton><Fit w={264}>Start Tracking Expenses</Fit></StartButton>
            </Hero>
            <Pointer width="16" height="25" viewBox="0 0 16 25">
              <path d="M1 1v19l4.300-4 3.500 7.500 3-1.300-3.300-7.200H14.500z" fill="#fff" stroke="#222" strokeWidth="1.200" />
            </Pointer>
            <ScrollThumb />
          </Page>

          <Taskbar>
            <Trend><TrendIcon /></Trend>
            <StartIcon />
            <Search>
              <Svg w={23} h={23}><circle cx="10" cy="10" r="8" stroke="#d0d0d0" strokeWidth="2.300" /><path d="M15.500 16l6 6.500" stroke="#d0d0d0" strokeWidth="2.800" /></Svg>
              <SearchText><Fit w={61}>Search</Fit></SearchText>
              <Curtain />
            </Search>
            <Apps>
              {apps.map((a, i) => (
                <AppCell key={i}>
                  <AppTile $active={a.active}>
                    {a.icon}
                    {(a.open || a.active) && <Indicator $wide={a.active} />}
                  </AppTile>
                </AppCell>
              ))}
            </Apps>
            <Tray>
              <Slot $w={46}><Stroke w={17} c="#cfcfd2" s={3} d="M2 18L12 6l10 12" /></Slot>
              <Slot $w={48}><Cloud /></Slot>
              <Slot $w={48}><Mic /></Slot>
              <Clock $w={67}><Fit w={34}>ENG</Fit><Fit w={22}>US</Fit></Clock>
              <Slot $w={42}><Wifi /></Slot>
              <Slot $w={30}><Volume /></Slot>
              <Slot $w={42}><Battery /></Slot>
              <Clock $w={104} $align="flex-end"><Fit w={87}>3:32:11 PM</Fit><Fit w={82}>3/27/2024</Fit></Clock>
              <Slot $w={46}><Bell /></Slot>
              <Slot $w={62} $h={36}><Copilot /></Slot>
            </Tray>
          </Taskbar>
        </Desktop>
      </Screen>
    </>
  );
}
